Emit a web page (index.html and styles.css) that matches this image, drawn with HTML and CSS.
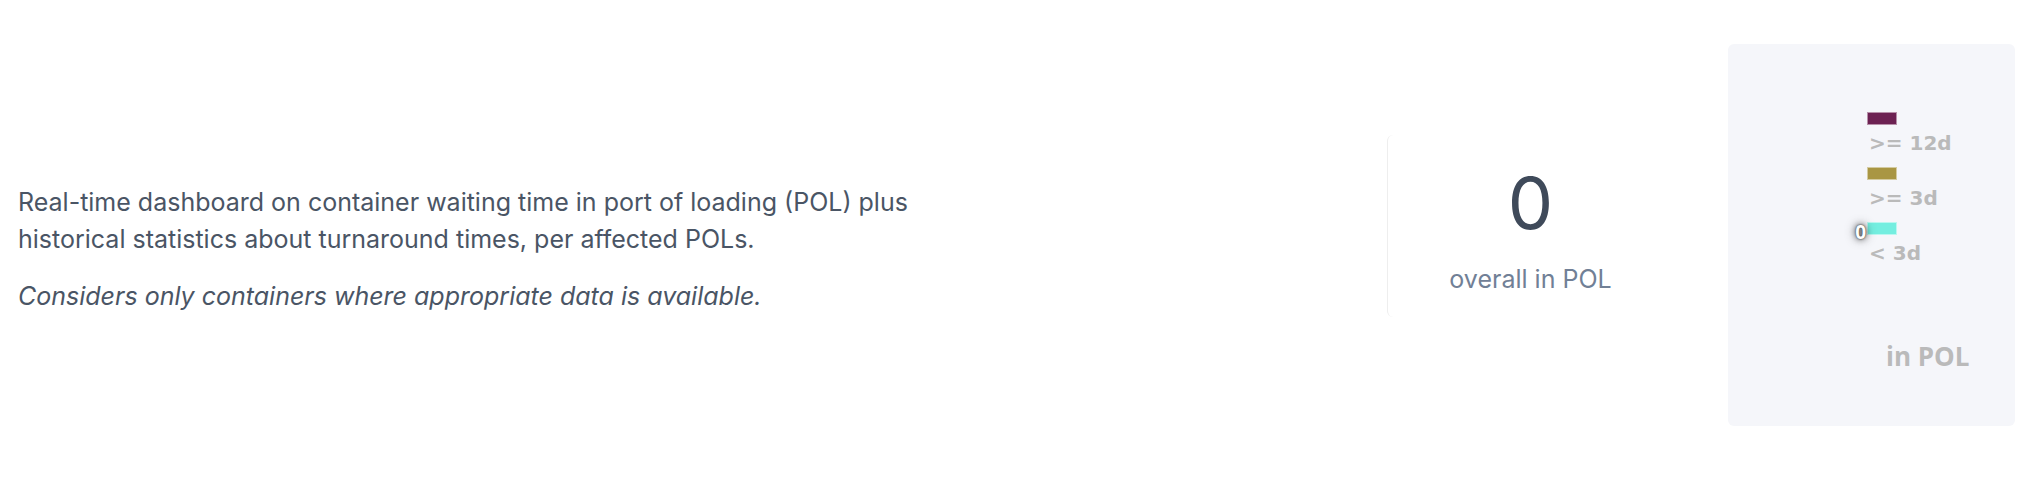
FILE: index.html
```html
<!DOCTYPE html>
<html lang="en">
<head>
    <meta charset="UTF-8">
    <meta name="viewport" content="width=device-width, initial-scale=1.0">
    <title>POL waiting time</title>
    <link rel="stylesheet" href="styles.css">
</head>
<body>

<div class="row">
    <div class="intro">
        <p>Real-time dashboard on container waiting time in port of loading (POL) plus historical statistics about turnaround times, per affected POLs.</p>
        <p class="note">Considers only containers where appropriate data is available.</p>
    </div>

    <div class="stat">
        <div class="stat-value">0</div>
        <div class="stat-label">overall in POL</div>
    </div>

    <div class="chart">
        <ul class="legend">
            <li class="legend-item">
                <span class="swatch swatch-long"></span>
                <span class="legend-text">&gt;= 12d</span>
            </li>
            <li class="legend-item">
                <span class="swatch swatch-mid"></span>
                <span class="legend-text">&gt;= 3d</span>
            </li>
            <li class="legend-item">
                <span class="swatch swatch-short"><span class="data-label">0</span></span>
                <span class="legend-text">&lt; 3d</span>
            </li>
        </ul>
        <div class="chart-title">in POL</div>
    </div>
</div>

</body>
</html>
```

FILE: styles.css
```css
body {
    font-family: Inter, "Noto Sans", sans-serif;
    margin: 0;
    background-color: #ffffff;
    color: #4a5565;
}
.row {
    display: flex;
    align-items: center;
    height: 480px;
    box-sizing: border-box;
    padding: 44px 13px 54px 18px;
}
.intro {
    flex: 1;
    padding-top: 9px;
    font-size: 25px;
    line-height: 37px;
}
.intro p {
    margin: 20px 0 0;
    max-width: 960px;
}
.intro .note {
    font-style: italic;
}
.stat {
    width: 286px;
    height: 182px;
    box-sizing: border-box;
    padding-top: 10px;
    border-left: 1px solid #eeeeee;
    border-radius: 6px;
    display: flex;
    flex-direction: column;
    align-items: center;
    justify-content: center;
    margin: 0 55px 18px 0;
}
.stat-value {
    font-size: 72px;
    line-height: 1;
    color: #3f4a5a;
}
.stat-label {
    font-size: 25px;
    line-height: 33px;
    margin-top: 24px;
    color: #718096;
}
.chart {
    width: 287px;
    height: 382px;
    background-color: #f5f6fa;
    border-radius: 6px;
    box-sizing: border-box;
    padding-top: 68px;
}
.legend {
    list-style: none;
    margin: 0 0 0 139px;
    padding: 0;
}
.legend-item {
    display: flex;
    flex-direction: column;
    align-items: flex-start;
    margin-bottom: 14px;
}
.swatch {
    position: relative;
    width: 30px;
    height: 13px;
    box-sizing: border-box;
    border: 1px solid rgba(255, 255, 255, 0.5);
}
.swatch-long {
    background-color: #6c2152;
}
.swatch-mid {
    background-color: #a99643;
}
.swatch-short {
    background-color: #74eee0;
}
.legend-text {
    font-family: "DejaVu Sans", sans-serif;
    font-weight: bold;
    font-size: 20px;
    line-height: 20px;
    margin-top: 8px;
    padding-left: 2px;
    color: #bababa;
    white-space: pre;
}
.data-label {
    position: absolute;
    right: calc(100% + 2px);
    top: -1px;
    font-family: "Open Sans", sans-serif;
    font-weight: bold;
    font-size: 19px;
    line-height: 20px;
    color: #ffffff;
    text-shadow: 0 0 2px #222222, 0 0 6px rgba(0, 0, 0, 0.7), 0 0 12px rgba(0, 0, 0, 0.45);
}
.chart-title {
    font-family: "Open Sans", sans-serif;
    font-weight: bold;
    font-size: 26px;
    line-height: 26px;
    margin: 80px 0 0 158px;
    color: #bababa;
}
```
